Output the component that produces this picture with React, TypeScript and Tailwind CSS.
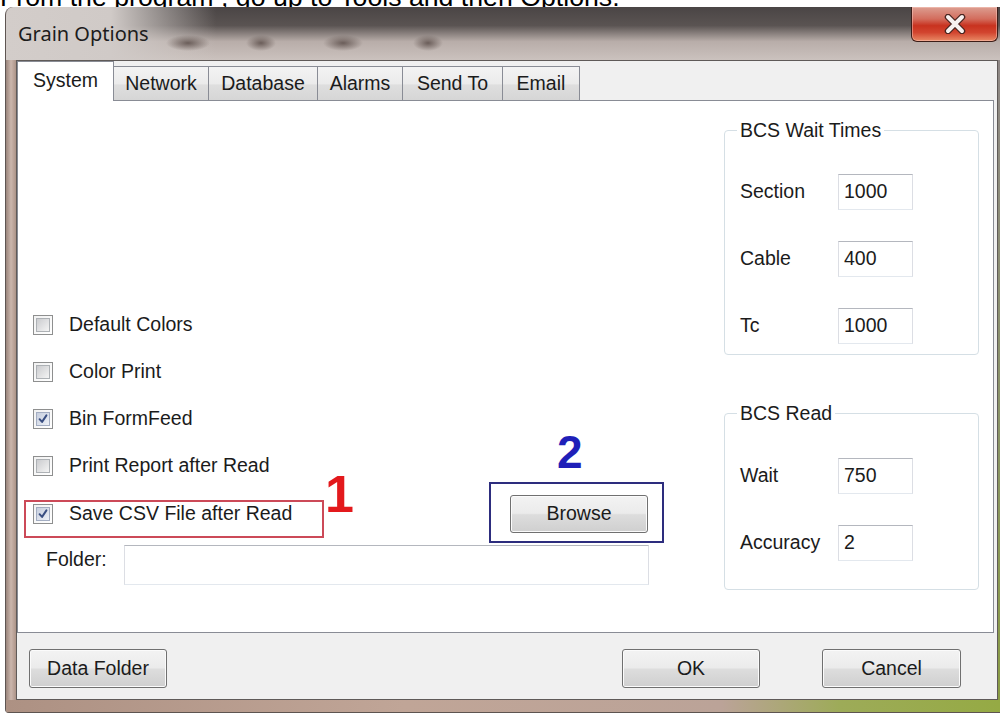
import React from "react";

const ui = "font-['Liberation_Sans',Arial,sans-serif]";

function CheckBox({ checked }: { checked?: boolean }) {
  return (
    <span className="flex h-[20px] w-[20px] shrink-0 items-center justify-center border border-[#8e8f8f] bg-[linear-gradient(135deg,#f1f1f1,#ffffff)]">
      <span
        className={
          checked
            ? "flex h-[14px] w-[14px] items-center justify-center border border-[#a3adc2] bg-[linear-gradient(135deg,#c6cede,#eef1f7)]"
            : "flex h-[14px] w-[14px] items-center justify-center border border-[#adb1b5] bg-[linear-gradient(135deg,#cbcccf,#f4f4f4)]"
        }
      >
        {checked && (
          <svg width="14" height="14" viewBox="0 0 14 14">
            <path d="M3 7.2 L5.9 10.4 L11 2.8" fill="none" stroke="#3a4f82" strokeWidth="2.3" strokeLinecap="round" strokeLinejoin="round" />
          </svg>
        )}
      </span>
    </span>
  );
}

function CheckRow({ label, checked }: { label: string; checked?: boolean }) {
  return (
    <div className="flex h-[22px] items-center gap-[16px]">
      <CheckBox checked={checked} />
      <span className="whitespace-nowrap">{label}</span>
    </div>
  );
}

function Field({ value, className }: { value: string; className: string }) {
  return (
    <div
      className={`flex items-center border border-[#b4b7be] border-l-[#dcdee4] border-r-[#dcdee4] border-b-[#e3e8ee] bg-white pl-[5px] ${className}`}
    >
      {value}
    </div>
  );
}

function Button({ label, className }: { label: string; className: string }) {
  return (
    <div
      className={`flex items-center justify-center rounded-[3px] border border-[#707070] bg-[linear-gradient(to_bottom,#f3f3f3_0%,#ebebeb_48%,#dddddd_52%,#cfcfcf_100%)] shadow-[inset_0_0_0_1px_#fbfbfb] ${className}`}
    >
      {label}
    </div>
  );
}

function Tab({ label, className, selected }: { label: string; className: string; selected?: boolean }) {
  if (selected) {
    return (
      <div className={`relative z-10 -mb-px flex h-[40px] items-center justify-center border border-b-0 border-[#898c95] bg-white pb-[1px] ${className}`}>
        {label}
      </div>
    );
  }
  return (
    <div
      className={`-ml-px flex h-[34px] items-center justify-center border border-b-0 border-[#898c95] bg-[linear-gradient(to_bottom,#f3f3f3_0%,#ebebeb_50%,#dedede_55%,#d6d6d6_100%)] ${className}`}
    >
      {label}
    </div>
  );
}

function ValueRow({ label, value }: { label: string; value: string }) {
  return (
    <div className="flex h-[36px] items-center">
      <span className="w-[98px] shrink-0">{label}</span>
      <Field value={value} className="h-[36px] w-[75px]" />
    </div>
  );
}

// soft smudge of the menu bar seen through the glass caption
function Smudge({ w }: { w: string }) {
  return <span className={`h-[16px] bg-[radial-gradient(closest-side,#6a5d59,#6a5d5900)] ${w}`} />;
}

export default function App() {
  return (
    <div className={`flex h-[713px] w-[1000px] flex-col overflow-hidden bg-white text-[19.5px] text-[#1b1b1b] ${ui}`}>
      {/* caption line above the dialog */}
      <div className="h-[7px] shrink-0 overflow-hidden">
        <p className="-mt-[16px] whitespace-nowrap text-[26.7px] leading-[26px] text-black">
          From the program , go up to Tools and then Options.
        </p>
      </div>

      {/* dialog window */}
      <div className="ml-[5px] flex w-[995px] flex-1 flex-col overflow-hidden rounded-tl-[8px] rounded-bl-[4px] border-l border-[#5e5552] bg-[#b9a196]">
        {/* title bar: dark glass band on top, lighter toward the bottom */}
        <div className="flex h-[53px] shrink-0 flex-col bg-[#4a4545]">
          <div className="flex h-[53px] items-start bg-[linear-gradient(to_bottom,#3d3a3a00_0%,#6a625f80_35%,#b8ada9_65%,#cbc2be_100%)]">
            <div className="flex h-[53px] w-[210px] shrink-0 items-start bg-[linear-gradient(to_right,#d3cdca_0%,#d0cac7_50%,#d0cac700_100%)]">
              <span className="pl-[12px] pt-[13px] font-['Noto_Sans','Open_Sans',sans-serif] text-[20px] leading-[28px] text-[#1c1c1c]">
                Grain Options
              </span>
            </div>
            <div className="-ml-[50px] mt-[28px] flex">
              <Smudge w="w-[44px]" />
              <span className="w-[36px]" />
              <Smudge w="w-[30px]" />
              <span className="w-[47px]" />
              <Smudge w="w-[40px]" />
              <span className="w-[50px]" />
              <Smudge w="w-[30px]" />
            </div>
            <div className="ml-auto mr-[2px] flex h-[35px] w-[87px] items-center justify-center rounded-b-[6px] border border-t-0 border-[#3c1d18] bg-[linear-gradient(to_bottom,#dc9e91_0%,#d36d5d_35%,#c8321f_55%,#d2452f_75%,#e98a66_100%)] shadow-[inset_0_0_0_1px_rgba(255,210,200,0.45)]">
              <svg width="26" height="20" viewBox="0 0 26 20">
                <path d="M6 3 L20 17 M20 3 L6 17" stroke="#4a2520" strokeWidth="6.5" strokeLinecap="round" />
                <path d="M6 3 L20 17 M20 3 L6 17" stroke="#f7f1ef" strokeWidth="4" strokeLinecap="round" />
              </svg>
            </div>
          </div>
        </div>

        {/* frame + client area */}
        <div className="flex h-[640px] shrink-0">
          <div className="w-[10px] shrink-0 bg-[#bba196] bg-[linear-gradient(to_right,#9a857c,#cbb6ac_50%,#ad9488)]" />
          <div className="flex w-[982px] shrink-0 flex-col border border-[#5f5a58] bg-[#f0f0f0]">
            {/* tab headers */}
            <div className="flex h-[39px] shrink-0 items-end">
              <Tab label="System" className="w-[97px]" selected />
              <Tab label="Network" className="w-[96px]" />
              <Tab label="Database" className="w-[110px]" />
              <Tab label="Alarms" className="w-[86px]" />
              <Tab label="Send To" className="w-[101px]" />
              <Tab label="Email" className="w-[78px]" />
            </div>

            {/* tab page */}
            <div className="mr-[3px] flex h-[533px] shrink-0 border border-[#898c95] bg-white">
              <div className="flex flex-1 flex-col pl-[15px] pt-[213px]">
                <div className="flex flex-col gap-[25px]">
                  <CheckRow label="Default Colors" />
                  <CheckRow label="Color Print" />
                  <CheckRow label="Bin FormFeed" checked />
                  <CheckRow label="Print Report after Read" />
                </div>

                <div className="-ml-[9px] mt-[23px] flex items-start">
                  <div className="relative h-[38px] w-[300px] shrink-0 border-2 border-[#cc4a58] pl-[7px] pt-[1px]">
                    <CheckRow label="Save CSV File after Read" checked />
                    <span className="absolute left-[299px] top-[-34px] text-[52px] font-bold leading-none text-[#e3191c]">1</span>
                  </div>
                  <div className="relative -mt-[18px] ml-[165px] h-[61px] w-[175px] shrink-0 border-2 border-[#2d2d7e] pl-[19px] pt-[11px]">
                    <span className="absolute left-[66px] top-[-55px] text-[46px] font-bold leading-none text-[#1f1fb8]">2</span>
                    <Button label="Browse" className="h-[38px] w-[138px]" />
                  </div>
                </div>

                <div className="ml-[13px] mt-[2px] flex h-[40px] items-center">
                  <span className="w-[78px] shrink-0 pb-[10px]">Folder:</span>
                  <Field value="" className="h-[40px] w-[525px]" />
                </div>
              </div>

              <div className="mr-[14px] flex w-[255px] shrink-0 flex-col pt-[18px]">
                <fieldset className="rounded-[4px] border border-[#d5dfe5] px-[15px]">
                  <legend className="-ml-[3px] bg-white px-[3px] leading-[22px]">BCS Wait Times</legend>
                  <div className="flex flex-col gap-[31px] pb-[10px] pt-[33px]">
                    <ValueRow label="Section" value="1000" />
                    <ValueRow label="Cable" value="400" />
                    <ValueRow label="Tc" value="1000" />
                  </div>
                </fieldset>
                <fieldset className="mt-[47px] rounded-[4px] border border-[#d5dfe5] px-[15px]">
                  <legend className="-ml-[3px] bg-white px-[3px] leading-[22px]">BCS Read</legend>
                  <div className="flex flex-col gap-[31px] pb-[28px] pt-[34px]">
                    <ValueRow label="Wait" value="750" />
                    <ValueRow label="Accuracy" value="2" />
                  </div>
                </fieldset>
              </div>
            </div>

            {/* dialog buttons */}
            <div className="flex flex-1 items-start pl-[12px] pr-[36px] pt-[16px]">
              <Button label="Data Folder" className="h-[39px] w-[138px]" />
              <Button label="OK" className="ml-auto h-[39px] w-[138px]" />
              <Button label="Cancel" className="ml-[62px] h-[39px] w-[139px]" />
            </div>
          </div>
          <div className="w-[3px] shrink-0 bg-[linear-gradient(to_bottom,#8f8886,#8a9466_60%,#8a9c44)]" />
        </div>

        {/* bottom frame */}
        <div className="h-[13px] shrink-0 border-b border-[#5d5450] bg-[linear-gradient(to_right,#ad9183,#c0a597_40%,#bba398_72%,#9dab58_84%,#95aa44)]" />
      </div>
    </div>
  );
}
